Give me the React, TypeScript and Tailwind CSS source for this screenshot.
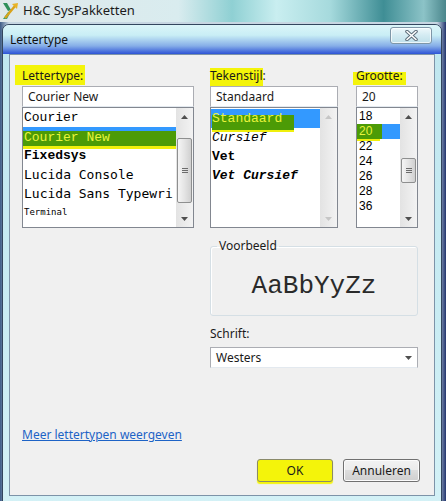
import * as React from "react";

const ui = "font-['Segoe_UI','Noto_Sans',sans-serif]";
const mono = "font-['Liberation_Mono','Courier_New',monospace]";
const lucida = "font-['DejaVu_Sans_Mono',monospace]";

const Arrow = ({ up, disabled }: { up?: boolean; disabled?: boolean }) => (
  <svg width="7" height="4" viewBox="0 0 7 4">
    <path
      d={up ? "M0 4 L3.5 0 L7 4 Z" : "M0 0 L7 0 L3.5 4 Z"}
      fill={disabled ? "#c6c6c6" : "#4f4f4f"}
    />
  </svg>
);

const ScrollBar = ({ thumb, disabled }: { thumb?: string; disabled?: boolean }) => (
  <div className="flex w-[17px] flex-col bg-[linear-gradient(to_right,#e3e3e3,#f3f3f3)]">
    <div className="flex h-[17px] items-center justify-center">
      <Arrow up disabled={disabled} />
    </div>
    <div className="flex-1">
      {thumb && (
        <div
          className={`${thumb} mx-[1px] flex items-center justify-center rounded-[2px] border border-[#8e8f8f] bg-[linear-gradient(to_right,#f5f5f5,#e4e4e4_50%,#d0d0d0)]`}
        >
          <div className="flex flex-col gap-[1px]">
            <div className="h-[1px] w-[6px] bg-[#6b6b6b]" />
            <div className="h-[1px] w-[6px] bg-[#6b6b6b]" />
            <div className="h-[1px] w-[6px] bg-[#6b6b6b]" />
          </div>
        </div>
      )}
    </div>
    <div className="flex h-[17px] items-center justify-center">
      <Arrow disabled={disabled} />
    </div>
  </div>
);

const Input = ({ value, width }: { value: string; width: string }) => (
  <div
    className={`${width} mt-[1px] h-[21px] border border-[#abadb3] border-b-[#e3e9ef] bg-white pl-[5px] text-[12px] leading-[19px] text-[#1a1a1a]`}
  >
    {value}
  </div>
);

const Logo = () => (
  <svg width="17" height="18" viewBox="0 0 17 18">
    <path d="M1 1 L5 1 L9 8 L6 9 Z" fill="#2f8f5a" />
    <path d="M6 10 L9 9 L5 17 L1 17 Z" fill="#39a06a" />
    <path d="M3 16 L13 4" stroke="#d9a31c" strokeWidth="2.4" />
    <path d="M10 2 L16 1 L15 7 Z" fill="#e8b326" />
  </svg>
);

const CloseButton = () => (
  <div className="mt-[2px] flex h-[17px] w-[42px] items-center justify-center rounded-[3px] border border-[#7f97a8] bg-[linear-gradient(to_bottom,#eef8fb,#d3ebf2_50%,#bfe0ea)] shadow-[inset_0_0_0_1px_rgba(255,255,255,0.7)]">
    <svg width="13" height="11" viewBox="0 0 13 11">
      <path d="M2 1.5 L11 9.5 M11 1.5 L2 9.5" stroke="#5d6d7a" strokeWidth="3.6" strokeLinecap="round" />
      <path d="M2 1.5 L11 9.5 M11 1.5 L2 9.5" stroke="#ffffff" strokeWidth="1.6" strokeLinecap="round" />
    </svg>
  </div>
);

const App: React.FC = () => {
  const sizes = ["18", "20", "22", "24", "26", "28", "36"];

  return (
    <div className={`${ui} h-[501px] w-[446px] overflow-hidden bg-[linear-gradient(to_right,#3d5b86,#c7d6e2_2%,#c7d6e2_98%,#22356e)]`}>
      {/* background app title bar */}
      <div className="flex h-[22px] items-center gap-[4px] bg-[linear-gradient(to_right,#dfe8ea,#d9ecef_40%,#8fd0d3_52%,#c9eef0_62%,#a6dadd_74%,#3f8e95_86%,#8cc3c7_95%,#4a868c)] pl-[2px]">
        <Logo />
        <span className="text-[13px] text-[#1b1b1b]">H&amp;C SysPakketten</span>
      </div>

      {/* dialog */}
      <div className="ml-[2px] mt-[2px] flex h-[479px] w-[440px] flex-col rounded-t-[7px] border border-[#33465e] bg-[linear-gradient(to_bottom,#bfe6ef,#c9ecf3_60%,#d3f1f6)]">
        <div className="flex h-[29px] items-start justify-between rounded-t-[6px] bg-[linear-gradient(to_bottom,#dbf5f9_0%,#c9eef5_35%,#86aee8_72%,#2d53d6_100%)] pl-[7px] pr-[9px]">
          <span className="mt-[7px] text-[12px] leading-[16px] text-[#101010]">Lettertype</span>
          <CloseButton />
        </div>

        <div className="mx-[6px] flex h-[442px] flex-col border border-[#7d93a8] bg-[#f0f0f0] text-[12px] text-[#1a1a1a]">
          {/* top row: three pickers */}
          <div className="flex pl-[12px] pt-[10px]">
            <div className="flex w-[172px] flex-col">
              <div className="h-[20px] leading-[22px]">
                <span className="-ml-[7px] inline-block h-[20px] bg-[#f4f40a] pl-[7px] pr-[2px]">Lettertype:</span>
              </div>
              <Input value="Courier New" width="w-[172px]" />
              <div className="flex h-[121px] border border-[#828790] bg-white">
                <div className="flex-1 overflow-hidden whitespace-nowrap text-[13px] text-black">
                  <div className={`${mono} h-[19px] pl-[1px] leading-[19px]`}>Courier</div>
                  <div className={`${mono} h-[19px] bg-[linear-gradient(to_bottom,#3399ff_0_4px,#4c9b06_4px)] pl-[1px] leading-[21px] text-[#e9f43c] shadow-[0_3px_0_#f0f00c]`}>
                    Courier New
                  </div>
                  <div className={`${mono} h-[19px] pl-[1px] font-bold leading-[19px]`}>Fixedsys</div>
                  <div className={`${lucida} h-[19px] pl-[1px] leading-[19px]`}>Lucida Console</div>
                  <div className={`${lucida} h-[19px] pl-[1px] leading-[19px]`}>Lucida Sans Typewri</div>
                  <div className={`${lucida} h-[19px] pl-[1px] text-[9px] leading-[19px]`}>Terminal</div>
                </div>
                <ScrollBar thumb="mt-[13px] h-[65px]" />
              </div>
            </div>

            <div className="ml-[16px] flex w-[128px] flex-col">
              <div className="h-[20px] leading-[22px]">
                <span className="inline-block h-[20px] bg-[linear-gradient(to_bottom,transparent_3px,#f4f40a_3px)] shadow-[0_3px_0_#f4f40a]">Tekenstijl</span>:
              </div>
              <Input value="Standaard" width="w-[128px]" />
              <div className="flex h-[121px] border border-[#828790] bg-white">
                <div className={`${mono} flex-1 overflow-hidden pt-[1px] text-[13px] text-black`}>
                  <div className="h-[19px] bg-[#3399ff] pl-[1px] leading-[19px]">
                    <span className="inline-block h-[19px] w-[82px] bg-[linear-gradient(to_bottom,transparent_6px,#4c9b06_6px)] text-[#e9f43c] shadow-[0_2px_0_#4c9b06,0_4px_0_#f0f00c]">
                      Standaard
                    </span>
                  </div>
                  <div className="h-[19px] pl-[1px] italic leading-[19px]">Cursief</div>
                  <div className="h-[19px] pl-[1px] font-bold leading-[19px]">Vet</div>
                  <div className="h-[19px] pl-[1px] font-bold italic leading-[19px]">Vet Cursief</div>
                </div>
                <ScrollBar disabled />
              </div>
            </div>

            <div className="ml-[18px] flex w-[62px] flex-col">
              <div className="h-[20px] leading-[22px]">
                <span className="-ml-[3px] inline-block h-[20px] bg-[linear-gradient(to_bottom,transparent_7px,#f4f40a_7px)] px-[3px]">Grootte:</span>
              </div>
              <Input value="20" width="w-[62px]" />
              <div className="flex h-[121px] border border-[#828790] bg-white">
                <div className="flex-1 overflow-hidden pt-[1px] font-['Liberation_Sans',sans-serif] text-[12px] text-black">
                  {sizes.map(s =>
                    s === "20" ? (
                      <div key={s} className="h-[15px] bg-[#3399ff] leading-[15px]">
                        <span className="inline-block h-[15px] w-[25px] bg-[#4c9b06] pl-[2px] text-[#e9f43c] shadow-[-2px_2px_0_#f0f00c]">
                          {s}
                        </span>
                      </div>
                    ) : (
                      <div key={s} className="h-[15px] pl-[2px] leading-[15px]">
                        {s}
                      </div>
                    )
                  )}
                </div>
                <ScrollBar thumb="mt-[33px] h-[25px]" />
              </div>
            </div>
          </div>

          {/* sample + script */}
          <div className="flex flex-col pl-[200px]">
            <fieldset className="mt-[10px] h-[78px] w-[208px] rounded-[3px] border border-[#d5dfe5] shadow-[inset_1px_1px_0_#ffffff]">
              <legend className="ml-[6px] px-[2px] leading-[16px]">Voorbeeld</legend>
              <div className={`${mono} mt-[17px] text-center text-[26px] leading-[30px] text-[#2a2a2a]`}>AaBbYyZz</div>
            </fieldset>
            <div className="mt-[10px] h-[16px] leading-[16px]">Schrift:</div>
            <div className="mt-[5px] flex h-[21px] w-[208px] items-center justify-between border border-[#abadb3] border-b-[#e3e9ef] bg-white pl-[5px] pr-[5px]">
              <span>Westers</span>
              <Arrow />
            </div>
          </div>

          {/* link */}
          <div className="mt-[59px] pl-[12px] leading-[16px]">
            <span className="text-[#1d63c6] underline">Meer lettertypen weergeven</span>
          </div>

          {/* buttons */}
          <div className="mt-[16px] flex justify-end gap-[10px] pr-[14px]">
            <div className="flex h-[23px] w-[76px] items-center justify-center rounded-[3px] border border-[#8a8a6a] bg-[#f4f40a] shadow-[0_2px_1px_#f4f40a]">
              OK
            </div>
            <div className="flex h-[23px] w-[77px] items-center justify-center rounded-[3px] border border-[#707070] bg-[linear-gradient(to_bottom,#f2f2f2,#ebebeb_50%,#dddddd_50%,#cfcfcf)] shadow-[inset_0_0_0_1px_#fcfcfc]">
              Annuleren
            </div>
          </div>
        </div>
      </div>
    </div>
  );
};

export default App;
